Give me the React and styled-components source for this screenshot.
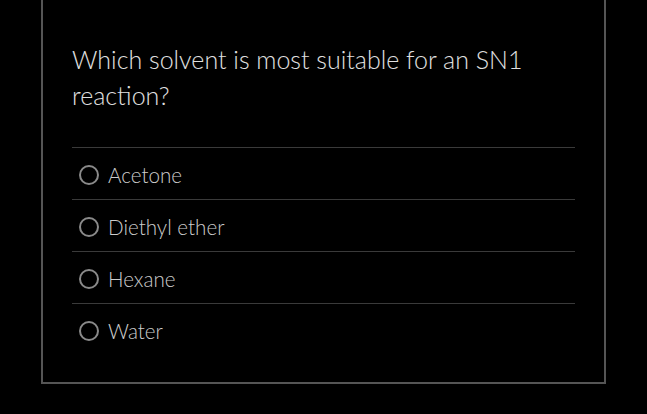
import styled, { createGlobalStyle } from "styled-components"

const GlobalStyle = createGlobalStyle`
  html, body {
    margin: 0;
    padding: 0;
    background: #000;
  }
  body {
    font-family: Lato, "Open Sans", sans-serif;
  }
`

const options = ["Acetone", "Diethyl ether", "Hexane", "Water"]

export default function App() {
  return (
    <>
      <GlobalStyle />
      <Page>
        <Card>
          <Question>Which solvent is most suitable for an SN1 reaction?</Question>
          <OptionList>
            {options.map((o) => (
              <Option key={o}>
                <Radio />
                <span>{o}</span>
              </Option>
            ))}
          </OptionList>
        </Card>
      </Page>
    </>
  )
}

const Page = styled.div`
  width: 647px;
  height: 414px;
  background: #000;
  padding: 0 41px;
  box-sizing: border-box;
`

const Card = styled.section`
  width: 565px;
  box-sizing: border-box;
  border: 2px solid #555;
  border-top: none;
  padding: 41px 29px 27px 29px;
`

const Question = styled.h2`
  margin: 0 0 34px 0;
  font-family: Lato, sans-serif;
  font-weight: 300;
  font-size: 25px;
  line-height: 36px;
  color: #e0e0e0;
  max-width: 470px;
`

const OptionList = styled.ul`
  list-style: none;
  margin: 0;
  padding: 0;
`

const Option = styled.li`
  display: flex;
  align-items: center;
  gap: 9px;
  height: 52px;
  box-sizing: border-box;
  padding: 3px 0 0 7px;
  border-top: 1px solid #3a3a3a;
  font-size: 20.6px;
  font-weight: 300;
  color: #cccccc;
`

const Radio = styled.span`
  width: 20px;
  height: 20px;
  box-sizing: border-box;
  border: 2px solid #8a8a8a;
  border-radius: 50%;
  flex-shrink: 0;
`
